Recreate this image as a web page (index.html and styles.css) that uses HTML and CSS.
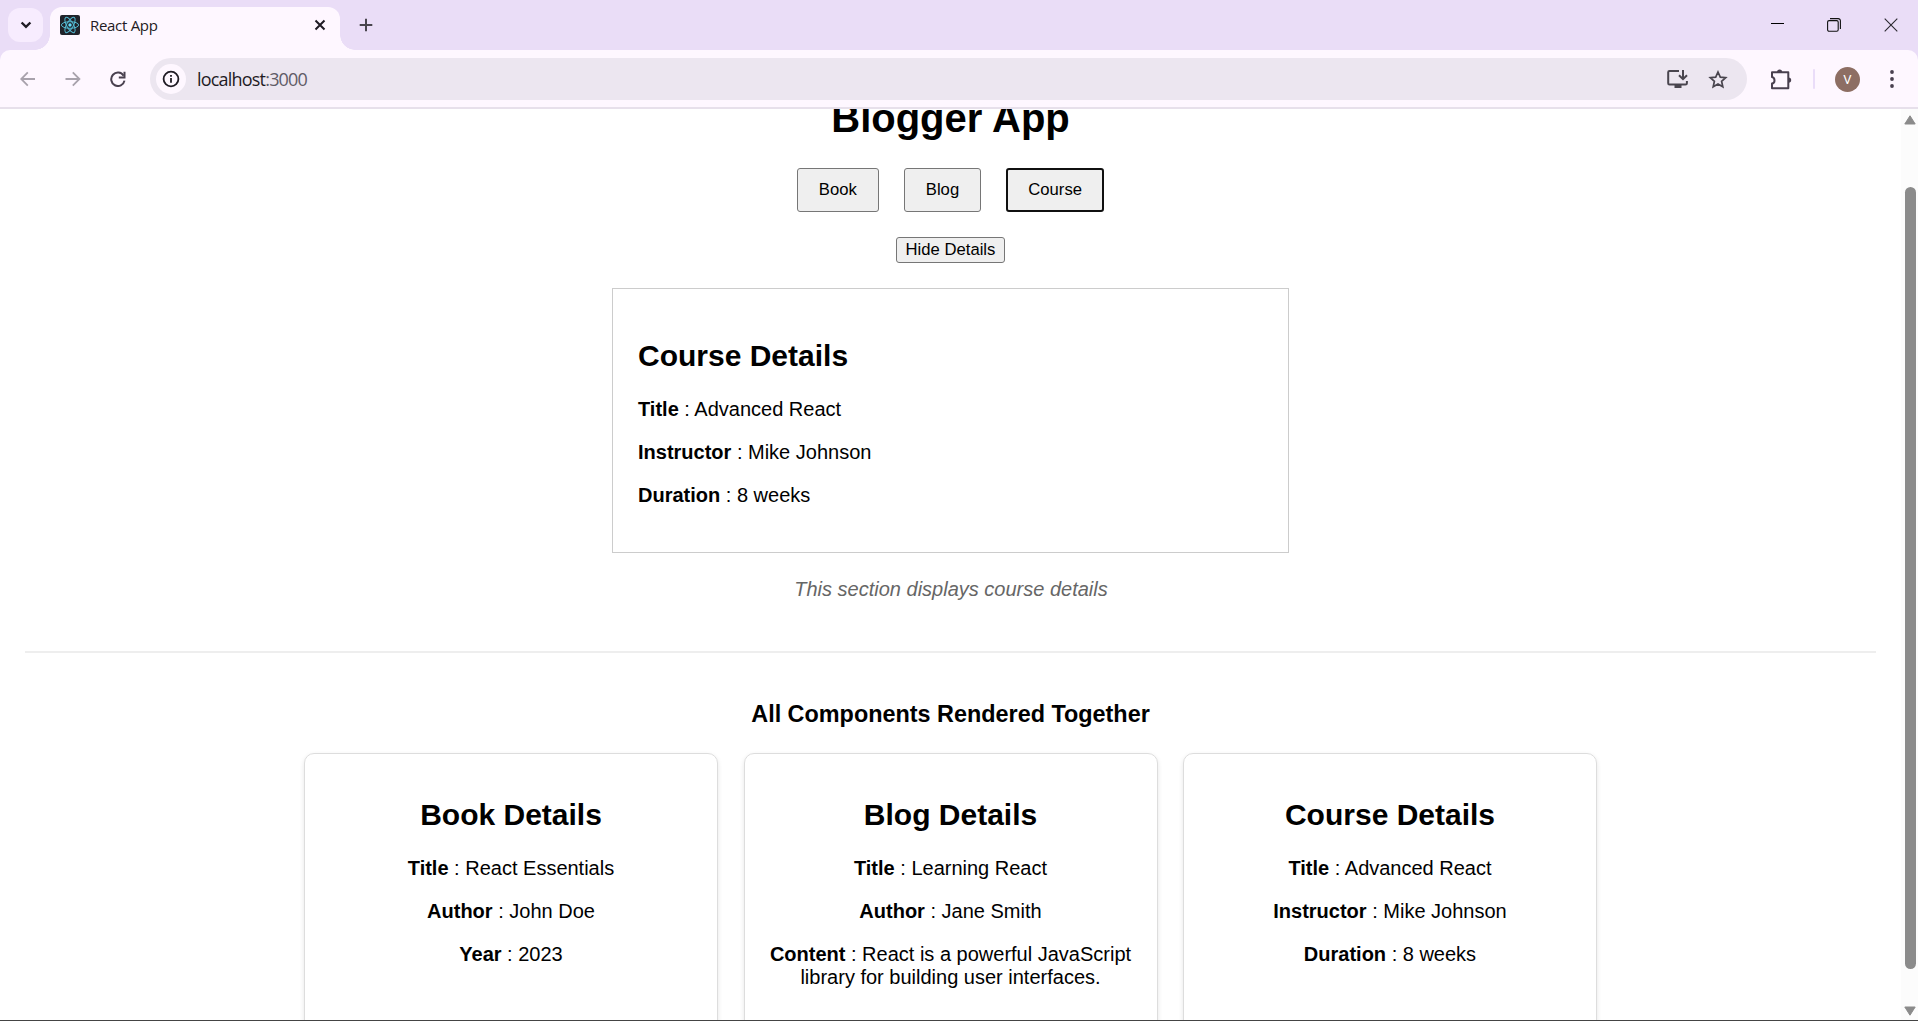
FILE: index.html
```html
<!DOCTYPE html>
<html lang="en">
<head>
<meta charset="utf-8">
<title>React App</title>
<link rel="stylesheet" href="styles.css">
</head>
<body>
<div class="window">
  <header class="tabstrip">
    <div class="tab-search"><svg width="12" height="8" viewBox="0 0 12 8"><path d="M1.6 1.5 6 5.8l4.4-4.3" fill="none" stroke="#1f1b24" stroke-width="2.4"/></svg></div>
    <div class="tab">
      <svg class="favicon" width="20" height="20" viewBox="0 0 20 20"><rect width="20" height="20" rx="2" fill="#20232a"/><g fill="none" stroke="#53b9d1" stroke-width="1"><ellipse cx="10" cy="10" rx="8.6" ry="3.3"/><ellipse cx="10" cy="10" rx="8.6" ry="3.3" transform="rotate(60 10 10)"/><ellipse cx="10" cy="10" rx="8.6" ry="3.3" transform="rotate(120 10 10)"/></g><circle cx="10" cy="10" r="1.7" fill="#61dafb"/></svg>
      <span class="tab-title">React App</span>
      <svg class="tab-close" width="12" height="12" viewBox="0 0 12 12"><path d="m1.5 1.5 9 9m0-9-9 9" stroke="#1f1b24" stroke-width="2"/></svg>
    </div>
    <svg class="new-tab" width="14" height="14" viewBox="0 0 14 14"><path d="M7 .7v12.6M.7 7h12.6" stroke="#49454e" stroke-width="2"/></svg>
    <div class="window-controls">
      <svg width="13" height="14" viewBox="0 0 13 14"><path d="M0 5.5h13" stroke="#000" stroke-width="1"/></svg>
      <svg width="14" height="14" viewBox="0 0 14 14" fill="none" stroke="#111" stroke-width="1.1"><rect x=".6" y="2.6" width="10.6" height="10.6" rx="1.5"/><path d="M3 .6h8.2a2.2 2.2 0 0 1 2.2 2.2V11"/></svg>
      <svg width="14" height="14" viewBox="0 0 14 14"><path d="m.7.7 12.6 12.6m0-12.6L.7 13.3" stroke="#2b2730" stroke-width="1.1"/></svg>
    </div>
  </header>
  <div class="toolbar-back">
    <div class="toolbar">
      <svg class="nav-back" width="16" height="16" viewBox="0 0 16 16" fill="none" stroke="#a8a2ac" stroke-width="1.8"><path d="M15 8H1.500M7.800 1.400 1.200 8l6.600 6.600"/></svg>
      <svg class="nav-forward" width="16" height="16" viewBox="0 0 16 16" fill="none" stroke="#a8a2ac" stroke-width="1.8"><path d="M.5 8H14M7.8 1.4 14.4 8l-6.6 6.6"/></svg>
      <svg class="nav-reload" width="16" height="16" viewBox="0 0 16 16"><path d="M13.6 4.7A6.7 6.7 0 1 0 14.5 9.6" fill="none" stroke="#49404f" stroke-width="2"/><path d="M14.5.7v5.7H8.8" fill="none" stroke="#49404f" stroke-width="2"/></svg>
      <div class="omnibox">
        <span class="site-info"><svg width="18" height="18" viewBox="0 0 18 18"><circle cx="9" cy="9" r="7.4" fill="none" stroke="#1f1b24" stroke-width="1.8"/><path d="M9 8v4.8M9 5v1.8" stroke="#1f1b24" stroke-width="1.8"/></svg></span>
        <span class="url">localhost<span class="port">:3000</span></span>
        <svg class="install" width="22" height="18" viewBox="0 0 22 18"><path d="M12 1H2.5Q1.200 1 1.200 2.300V13.200Q1.200 14.500 2.500 14.500H18.500Q19.900 14.500 19.900 13.200V11" fill="none" stroke="#49454e" stroke-width="2"/><path d="M7.500 14.500h7V18h-7z" fill="#49454e"/><path d="M16 0v9M12 5.200l4 4 4-4" fill="none" stroke="#49454e" stroke-width="2"/></svg>
        <svg class="star" width="20" height="19" viewBox="0 0 20 19"><path d="m10 2 2.300 5.100 5.400.5-4.100 3.700 1.200 5.500-4.800-2.900-4.800 2.900 1.200-5.500-4.100-3.700 5.400-.5z" fill="none" stroke="#49454e" stroke-width="1.700"/></svg>
      </div>
      <svg class="extensions" width="22" height="21" viewBox="0 0 22 21"><path d="M2 3.200h16.300v16H2v-4.600q2.500-.4 2.500-3.200T2 8.100z" fill="none" stroke="#49404f" stroke-width="2" stroke-linejoin="round"/><path d="M7 3a2.600 2.600 0 0 1 5.200 0zM18.500 8.400a2.700 2.700 0 0 1 0 5.400z" fill="#49404f"/></svg>
      <span class="divider"></span>
      <span class="avatar">V</span>
      <svg class="menu" width="4" height="18" viewBox="0 0 4 18" fill="#49404f"><circle cx="2" cy="2" r="1.900"/><circle cx="2" cy="9" r="1.900"/><circle cx="2" cy="16" r="1.900"/></svg>
    </div>
  </div>
  <div class="viewport">
    <main class="page">
      <h1>Blogger App</h1>
      <nav class="choices">
        <button class="choice">Book</button>
        <button class="choice">Blog</button>
        <button class="choice active">Course</button>
      </nav>
      <button class="toggle">Hide Details</button>
      <section class="details">
        <h2>Course Details</h2>
        <p><b>Title</b> : Advanced React</p>
        <p><b>Instructor</b> : Mike Johnson</p>
        <p><b>Duration</b> : 8 weeks</p>
      </section>
      <p class="caption">This section displays course details</p>
      <section class="all">
        <h3>All Components Rendered Together</h3>
        <div class="cards">
          <article class="card">
            <h2>Book Details</h2>
            <p><b>Title</b> : React Essentials</p>
            <p><b>Author</b> : John Doe</p>
            <p><b>Year</b> : 2023</p>
          </article>
          <article class="card">
            <h2>Blog Details</h2>
            <p><b>Title</b> : Learning React</p>
            <p><b>Author</b> : Jane Smith</p>
            <p><b>Content</b> : React is a powerful JavaScript library for building user interfaces.</p>
          </article>
          <article class="card">
            <h2>Course Details</h2>
            <p><b>Title</b> : Advanced React</p>
            <p><b>Instructor</b> : Mike Johnson</p>
            <p><b>Duration</b> : 8 weeks</p>
          </article>
        </div>
      </section>
    </main>
    <aside class="scrollbar">
      <svg width="12" height="10" viewBox="0 0 12 10"><path d="M6 .8 11.200 9H.8z" fill="#8b8b8b" stroke="#8b8b8b" stroke-linejoin="round"/></svg>
      <span class="thumb"></span>
      <svg class="down" width="12" height="10" viewBox="0 0 12 10"><path d="M6 9.200 11.200 1H.8z" fill="#8b8b8b" stroke="#8b8b8b" stroke-linejoin="round"/></svg>
    </aside>
  </div>
</div>
</body>
</html>
```
FILE: styles.css
```css
* { box-sizing: border-box; }
body { margin: 0; overflow: hidden; background: #fff; color: #000; font: 20px/23px "Liberation Sans", Arial, sans-serif; }
svg { display: block; flex: none; }
.window { display: flex; flex-direction: column; height: 1021px; border-bottom: 1px solid #444; overflow: hidden; }

.tabstrip { display: flex; height: 50px; flex: none; background: #eaddf7; padding-left: 8px; }
.tab-search { display: flex; align-items: center; justify-content: center; width: 35px; height: 34px; margin-top: 8px; border-radius: 12px; background: #f7ecfe; }
.tab { position: relative; display: flex; align-items: center; width: 290px; height: 43px; margin: 7px 0 0 7px; padding: 0 14px 7px 10px; border-radius: 12px 12px 0 0; background: #fef7ff; }
.tab::before, .tab::after { content: ""; position: absolute; bottom: 0; width: 15px; height: 15px; }
.tab::before { left: -15px; background: radial-gradient(circle at 0 0, transparent 14.5px, #fef7ff 15px); }
.tab::after { right: -15px; background: radial-gradient(circle at 100% 0, transparent 14.5px, #fef7ff 15px); }
.tab-title { margin-left: 10px; font: 15px/20px "Open Sans", "Noto Sans", sans-serif; letter-spacing: -.3px; color: #1f1b24; }
.tab-close { margin-left: auto; }
.new-tab { margin: 18px 0 0 19px; }
.window-controls { display: flex; gap: 43px; margin: 18px 20px 0 auto; }

.toolbar-back { flex: none; background: #eaddf7; }
.toolbar { display: flex; align-items: center; height: 59px; padding-top: 1px; background: #fef7ff; border-bottom: 2px solid #e7e0eb; border-radius: 10px 10px 0 0; }
.nav-back { margin-left: 20px; }
.nav-forward { margin-left: 29px; }
.nav-reload { margin-left: 29px; }
.omnibox { display: flex; align-items: center; width: 1597px; height: 42px; margin-left: 24px; padding: 0 19px 0 6px; border-radius: 21px; background: #ece6f0; }
.site-info { display: flex; align-items: center; justify-content: center; width: 30px; height: 30px; border-radius: 50%; background: #fef7ff; }
.url { margin-left: 11px; font: 18px/24px "Open Sans", "Noto Sans", sans-serif; letter-spacing: -.8px; color: #1f1b24; }
.port { color: #605b66; }
.install { margin-left: auto; }
.star { margin-left: 19px; }
.extensions { margin-left: 23px; }
.divider { width: 2px; height: 20px; margin-left: 21px; background: #eaddf9; border-radius: 1px; }
.avatar { width: 25px; height: 25px; margin-left: 20px; border-radius: 50%; background: #8d6e63; color: #fff; font: 13px/25px Roboto, sans-serif; text-align: center; }
.menu { margin-left: 30px; }

.viewport { display: flex; flex: 1; min-height: 0; overflow: hidden; }
.page { flex: 1; padding: 0 25px; text-align: center; }
h1 { margin: -14px 0 27px; font-size: 40px; line-height: 46px; }
.choices { display: flex; justify-content: center; gap: 25px; }
button { font: 16.67px/19px "Liberation Sans", Arial, sans-serif; color: #000; background: #efefef; border: 1px solid #767676; border-radius: 3px; }
.choice { height: 44px; padding: 0 21px 2px; }
.choice.active { width: 98px; padding: 0 0 2px; border: 2px solid #101010; }
.toggle { display: block; width: 109px; height: 26px; margin: 25px auto; padding: 0 0 2px; white-space: nowrap; }
.details { width: 677px; height: 265px; margin: 0 auto; padding: 25px; border: 1px solid #ccc; text-align: left; }
h2 { margin: 25px 0; font-size: 30px; line-height: 34px; }
p { margin: 20px 0; }
.caption { margin: 25px 0 50px; padding-left: 1px; font-style: italic; color: #666; }
.all { border-top: 2px solid #eee; padding-top: 49px; }
h3 { margin: 0 0 26px; font-size: 23.4px; line-height: 25px; }
.cards { display: grid; grid-template-columns: repeat(3, 414px); gap: 25.5px; justify-content: center; }
.card { height: 330px; padding: 19px; border: 1px solid #ddd; border-radius: 10px; box-shadow: 0 2px 5px rgba(0, 0, 0, .1); }

.scrollbar { display: flex; flex-direction: column; align-items: center; width: 17px; padding: 6px 0 4px 1px; background: #fcfcfc; }
.thumb { width: 11px; height: 782px; margin-top: 62px; border-radius: 6px; background: #8b8b8b; }
.down { margin-top: auto; }
```
